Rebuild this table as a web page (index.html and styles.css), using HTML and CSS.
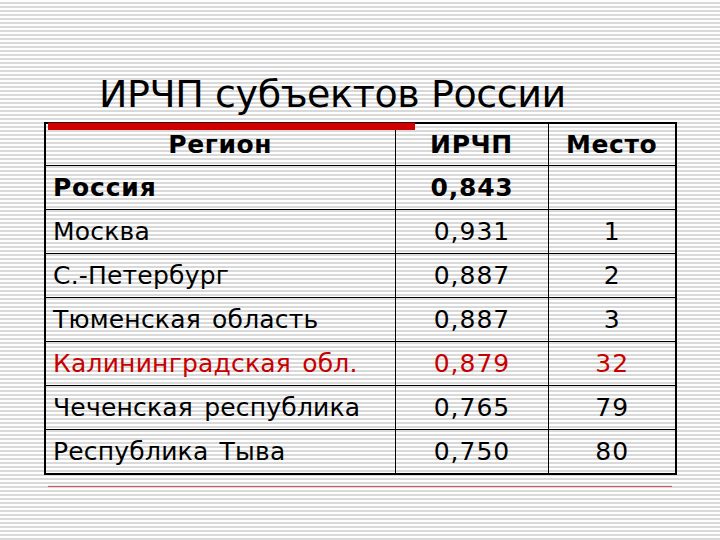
FILE: index.html
```html
<!DOCTYPE html>
<html lang="ru">
<head>
<meta charset="utf-8">
<link rel="stylesheet" href="styles.css">
</head>
<body>
<div class="slide">
  <h1 class="title">ИРЧП субъектов России</h1>
  <div class="table-wrap">
    <div class="red-bar"></div>
    <table class="data">
      <colgroup><col class="c1"><col class="c2"><col class="c3"></colgroup>
      <tr class="head"><th>Регион</th><th>ИРЧП</th><th>Место</th></tr>
      <tr class="bold"><td class="name">Россия</td><td class="num">0,843</td><td></td></tr>
      <tr><td class="name">Москва</td><td class="num">0,931</td><td class="num">1</td></tr>
      <tr><td class="name">С.-Петербург</td><td class="num">0,887</td><td class="num">2</td></tr>
      <tr><td class="name">Тюменская область</td><td class="num">0,887</td><td class="num">3</td></tr>
      <tr class="red"><td class="name">Калининградская обл.</td><td class="num">0,879</td><td class="num">32</td></tr>
      <tr><td class="name">Чеченская республика</td><td class="num">0,765</td><td class="num">79</td></tr>
      <tr><td class="name">Республика Тыва</td><td class="num">0,750</td><td class="num">80</td></tr>
    </table>
  </div>
  <div class="bottom-line"></div>
</div>
</body>
</html>
```

FILE: styles.css
```css
html, body {
  margin: 0;
  padding: 0;
}
body {
  width: 720px;
  height: 540px;
  overflow: hidden;
  background: repeating-linear-gradient(to bottom, #ffffff 0px, #ffffff 2px, #d9d9d9 2px, #d9d9d9 4px);
  font-family: "DejaVu Sans", Verdana, sans-serif;
  color: #000;
}
.slide {
  display: flex;
  flex-direction: column;
  padding-top: 70px;
}
.title {
  margin: 0 0 0 99px;
  font-weight: normal;
  font-size: 38px;
  line-height: 48px;
  height: 52px;
  letter-spacing: -0.4px;
}
.table-wrap {
  position: relative;
  margin-left: 44px;
  width: 633px;
}
.red-bar {
  position: absolute;
  left: 4px;
  top: 0;
  width: 367px;
  height: 8px;
  background: #d00000;
  border-top: 1px solid #400000;
  box-sizing: border-box;
}
.data {
  border-collapse: collapse;
  width: 633px;
  border: 2px solid #000;
  font-size: 25px;
}
.c1 { width: 350px; }
.c2 { width: 153px; }
.c3 { width: 128px; }
.data th, .data td {
  border: 1px solid #000;
  height: 43px;
  padding: 0;
  text-align: center;
  vertical-align: middle;
  line-height: 28px;
}
.data th {
  font-weight: bold;
  height: 40px;
  padding-top: 1px;
  letter-spacing: 0.6px;
}
.data td.name {
  text-align: left;
  padding-left: 7px;
  word-spacing: 3px;
  letter-spacing: 0.2px;
}
.data td.num {
  letter-spacing: 1px;
  padding-left: 1px;
}
.data tr.bold td {
  font-weight: bold;
  letter-spacing: 0.8px;
}
.data tr.red td {
  color: #c80000;
}
.bottom-line {
  margin: 11px 0 0 48px;
  width: 624px;
  height: 1px;
  background: #e05050;
  box-shadow: 0 -1px 0 #e0f4f4;
}
```
